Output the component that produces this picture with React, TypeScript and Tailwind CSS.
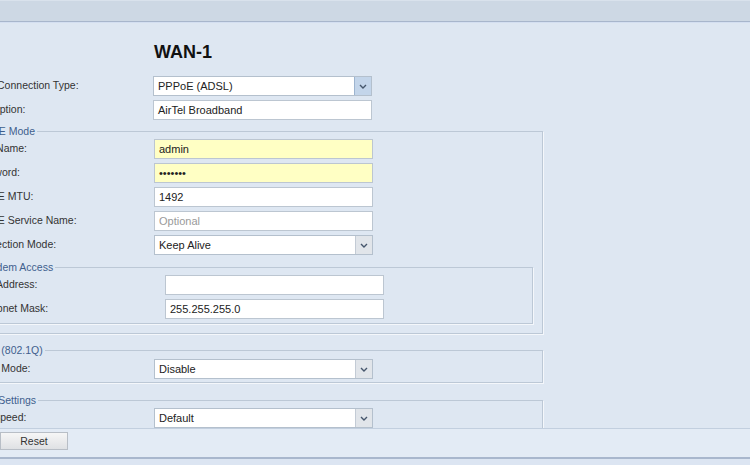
import React from 'react';

// ── Small building blocks ──────────────────────────────────────────────────
const Chevron = () => (
  <svg width="8" height="5" viewBox="0 0 8 5" className="block">
    <path d="M1 1 L4 4 L7 1" fill="none" stroke="#46566c" strokeWidth="1.4" />
  </svg>
);

const Select = ({ value, active = false }: { value: string; active?: boolean }) => (
  <div className="w-[219px] h-[20px] flex bg-white border border-[#b4c0cd]">
    <span className="flex-1 px-[4px] leading-[18px] text-[#222]">{value}</span>
    <span
      className={`w-[17px] flex items-center justify-center border-l ${
        active ? 'bg-[#c3d5ea] border-[#9db4cf]' : 'bg-[#e1e5ea] border-[#c3cbd5]'
      }`}
    >
      <Chevron />
    </span>
  </div>
);

const Input = ({ value = '', placeholder, yellow = false }: { value?: string; placeholder?: string; yellow?: boolean }) => (
  <div
    className={`w-[219px] h-[20px] px-[4px] leading-[18px] border border-[#bcc6d1] ${
      yellow ? 'bg-[#ffffc4]' : 'bg-white'
    }`}
  >
    {value ? <span className="text-[#222]">{value}</span> : <span className="text-[#9a9a9a]">{placeholder}</span>}
  </div>
);

const Row = ({ label, labelW = 183, children }: { label: string; labelW?: number; children: React.ReactNode }) => (
  <div className="flex items-center h-[20px]">
    <span style={{ width: labelW }} className="shrink-0 text-[10.5px] text-[#333] whitespace-nowrap">{label}</span>
    {children}
  </div>
);

// legendCls carries the legend's own offset (the legends sit close to the left border)
const Group = ({ legend, legendCls, className = '', children }: { legend: string; legendCls: string; className?: string; children: React.ReactNode }) => (
  <fieldset className={`border border-[#bcc8d6] shadow-[1px_1px_0_#f4f7fb] ${className}`}>
    <legend className={`px-[2px] text-[10.5px] text-[#3e5f8e] leading-[12px] ${legendCls}`}>{legend}</legend>
    {children}
  </fieldset>
);

export default function App() {
  return (
    <div className="w-[750px] h-[465px] overflow-hidden flex flex-col bg-[#dee7f2] text-[11px] font-['Liberation_Sans',Arial,sans-serif]">

      {/* Top bar */}
      <div className="h-[21px] shrink-0 bg-[#cdd8e4] border-t border-[#d9e2ec]" />
      <div className="h-px shrink-0 bg-[#a8b6cc]" />
      <div className="h-px shrink-0 bg-[#d4dff1]" />

      {/* Form */}
      <div className="h-[405px] shrink-0 overflow-hidden">
        <div className="ml-[-30px] w-[600px]">
          <h1 className="ml-[184px] mt-[17px] h-[24px] leading-[24px] text-[18px] font-bold text-[#111]">WAN-1</h1>

          <div className="mt-[12px] flex flex-col gap-[4px]">
            <Row label="WAN Connection Type:"><Select value="PPPoE (ADSL)" active /></Row>
            <Row label="Description:"><Input value="AirTel Broadband" /></Row>
          </div>

          <Group legend="PPPoE Mode" legendCls="ml-[-1px]" className="ml-[-8px] w-[581px] mt-[5px] pl-[8px] pt-[2px] pb-[9px]">
            <div className="flex flex-col gap-[4px]">
              <Row label="User Name:"><Input value="admin" yellow /></Row>
              <Row label="Password:"><Input value="•••••••" yellow /></Row>
              <Row label="PPPoE MTU:"><Input value="1492" /></Row>
              <Row label="PPPoE Service Name:"><Input placeholder="Optional" /></Row>
              <Row label="Connection Mode:"><Select value="Keep Alive" /></Row>
            </div>

            <Group legend="Modem Access" legendCls="ml-[-4px]" className="ml-[6px] w-[556px] mt-[6px] pl-[6px] pt-[2px] pb-[4px]">
              <div className="flex flex-col gap-[4px]">
                <Row label="IP Address:" labelW={181}><Input /></Row>
                <Row label="Subnet Mask:" labelW={181}><Input value="255.255.255.0" /></Row>
              </div>
            </Group>
          </Group>

          <Group legend="VLAN (802.1Q)" legendCls="ml-[-2px]" className="ml-[-8px] w-[581px] mt-[10px] pl-[8px] pt-[3px] pb-[3px]">
            <Row label="VLAN Mode:"><Select value="Disable" /></Row>
          </Group>

          <Group legend="Port Settings" legendCls="ml-[3px]" className="ml-[-8px] w-[581px] mt-[11px] pl-[8px] pt-[2px] pb-[6px]">
            <Row label="Link Speed:"><Select value="Default" /></Row>
          </Group>
        </div>
      </div>

      {/* Footer */}
      <div className="h-[29px] shrink-0 border-t border-[#c2cfdf] bg-[#e3ebf5] flex items-start pt-[3px]">
        <button className="w-[68px] h-[18px] border border-[#b8bec6] bg-gradient-to-b from-[#f6f6f6] to-[#dfe1e4] text-[#333] leading-[16px] text-[10.5px]">
          Reset
        </button>
      </div>
      <div className="h-[2px] shrink-0 bg-[#a9b7cd]" />
      <div className="flex-1 bg-[#dce5f2]" />
    </div>
  );
}
